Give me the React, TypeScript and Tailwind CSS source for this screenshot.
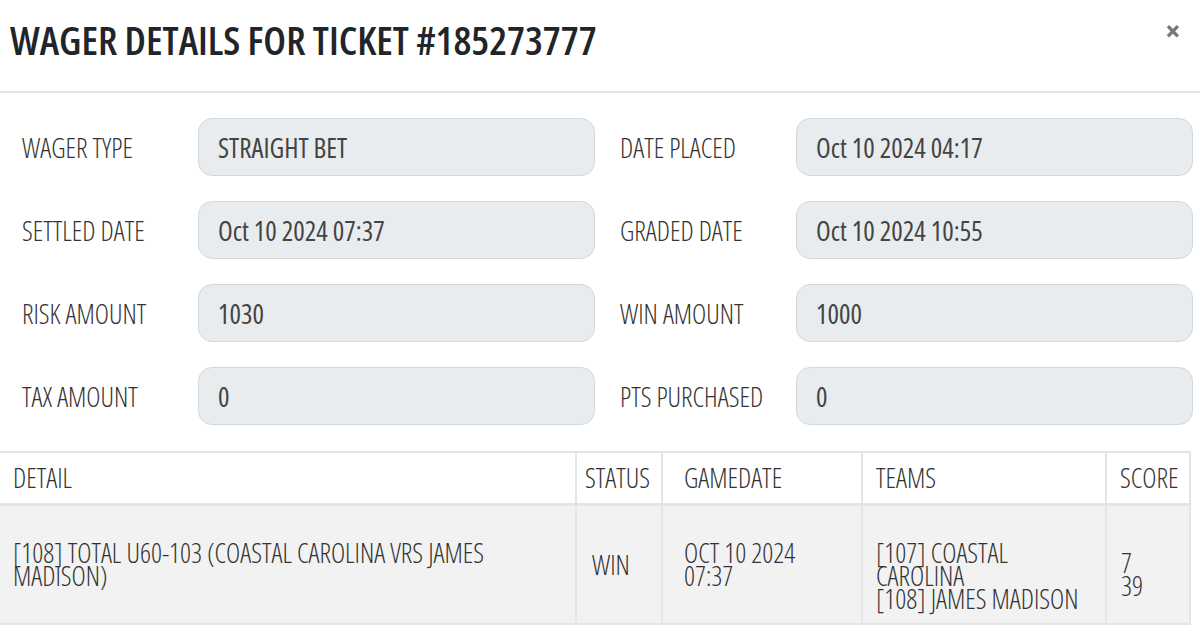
const fields = [
  ["WAGER TYPE", "STRAIGHT BET", "DATE PLACED", "Oct 10 2024 04:17"],
  ["SETTLED DATE", "Oct 10 2024 07:37", "GRADED DATE", "Oct 10 2024 10:55"],
  ["RISK AMOUNT", "1030", "WIN AMOUNT", "1000"],
  ["TAX AMOUNT", "0", "PTS PURCHASED", "0"],
];

function Field({ label, value }: { label: string; value: string }) {
  return (
    <div className="flex items-center">
      <div className="w-[176px] text-[27px] font-light text-[#333] leading-none">{label}</div>
      <div className="w-[397px] h-[58px] flex items-center px-[19px] rounded-[14px] border border-[#d4d8dc] bg-[#e9ecef] text-[27px] text-[#444] leading-none">
        {value}
      </div>
    </div>
  );
}

export default function App() {
  return (
    <div className="w-[1200px] h-[631px] overflow-hidden bg-white font-['Open_Sans',sans-serif] [font-stretch:condensed]">
      {/* Header */}
      <div className="h-[93px] flex items-start justify-between border-b-2 border-[#e3e6e9]">
        <h1 className="pl-[10px] pt-[20px] text-[40px] font-semibold text-[#212529] leading-none">
          WAGER DETAILS FOR TICKET #185273777
        </h1>
        <button className="pr-[20px] pt-[16px] text-[30px] font-bold text-[#777] leading-none">×</button>
      </div>

      {/* Fields */}
      <div className="pt-[25px] pl-[22px] flex flex-col gap-[25px]">
        {fields.map((f) => (
          <div key={f[0]} className="flex gap-[25px]">
            <Field label={f[0]} value={f[1]} />
            <Field label={f[2]} value={f[3]} />
          </div>
        ))}
      </div>

      {/* Bet table */}
      <table className="mt-[26px] w-[1191px] table-fixed border-collapse text-[#333] font-light text-[27px]">
        <thead>
          <tr className="h-[52px] border-t-2 border-b-[3px] border-[#e3e6e9] text-left">
            <th className="w-[576px] px-[13px] font-light border-r-2 border-[#e3e6e9]">DETAIL</th>
            <th className="w-[86px] px-[8px] font-light border-r-2 border-[#e3e6e9]">STATUS</th>
            <th className="w-[200px] px-[21px] font-light border-r-2 border-[#e3e6e9]">GAMEDATE</th>
            <th className="w-[244px] px-[13px] font-light border-r-2 border-[#e3e6e9]">TEAMS</th>
            <th className="px-[13px] font-light border-r-2 border-[#e3e6e9]">SCORE</th>
          </tr>
        </thead>
        <tbody>
          <tr className="h-[120px] bg-[#f2f2f2] border-b-2 border-[#e3e6e9] leading-[23px] align-top">
            <td className="px-[13px] pt-[35px] border-r-2 border-[#e3e6e9]">
              [108] TOTAL U60-103 (COASTAL CAROLINA VRS JAMES MADISON)
            </td>
            <td className="pl-[15px] pr-[4px] pt-[47px] border-r-2 border-[#e3e6e9]">WIN</td>
            <td className="px-[21px] pt-[35px] border-r-2 border-[#e3e6e9]">OCT 10 2024 07:37</td>
            <td className="px-[13px] pt-[35px] border-r-2 border-[#e3e6e9]">
              [107] COASTAL CAROLINA
              <br />
              [108] JAMES MADISON
            </td>
            <td className="px-[14px] pt-[45px] border-r-2 border-[#e3e6e9]">
              7
              <br />
              39
            </td>
          </tr>
        </tbody>
      </table>
    </div>
  );
}
